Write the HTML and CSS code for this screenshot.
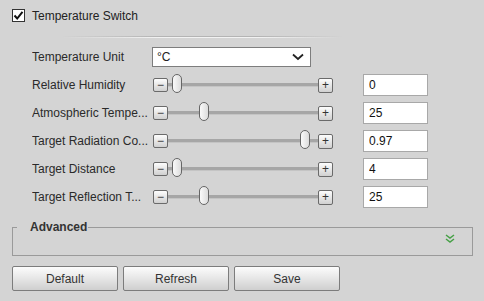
FILE: index.html
```html
<!DOCTYPE html>
<html lang="en">
<head>
  <meta charset="UTF-8">
  <title>Temperature</title>
  <link rel="stylesheet" href="styles.css">
</head>
<body>

<div class="panel">
  <label class="switch">
    <span class="check"><svg width="11" height="11" viewBox="0 0 11 11"><path d="M1.5 5.5 L4.2 8.5 L9.5 1.8" fill="none" stroke="#111" stroke-width="2"/></svg></span>
    Temperature Switch
  </label>

  <div class="sep"></div>

  <div class="rows">
    <div class="row">
      <span class="label">Temperature Unit</span>
      <div class="select">
        <span>°C</span>
        <svg width="12" height="8" viewBox="0 0 12 8"><path d="M1 1.5 L6 6 L11 1.5" fill="none" stroke="#222" stroke-width="1.8"/></svg>
      </div>
    </div>

    <div class="row">
      <span class="label">Relative Humidity</span>
      <div class="slider">
        <span class="step">&minus;</span>
        <div class="track"><div class="range"><span class="thumb" style="left: 0%"></span></div></div>
        <span class="step plus">+</span>
      </div>
      <input class="value" type="text" value="0">
    </div>

    <div class="row">
      <span class="label" title="Atmospheric Temperature">Atmospheric Tempe...</span>
      <div class="slider">
        <span class="step">&minus;</span>
        <div class="track"><div class="range"><span class="thumb" style="left: 20.6%"></span></div></div>
        <span class="step plus">+</span>
      </div>
      <input class="value" type="text" value="25">
    </div>

    <div class="row">
      <span class="label" title="Target Radiation Coefficient">Target Radiation Co...</span>
      <div class="slider">
        <span class="step">&minus;</span>
        <div class="track"><div class="range"><span class="thumb" style="left: 97%"></span></div></div>
        <span class="step plus">+</span>
      </div>
      <input class="value" type="text" value="0.97">
    </div>

    <div class="row">
      <span class="label">Target Distance</span>
      <div class="slider">
        <span class="step">&minus;</span>
        <div class="track"><div class="range"><span class="thumb" style="left: 0%"></span></div></div>
        <span class="step plus">+</span>
      </div>
      <input class="value" type="text" value="4">
    </div>

    <div class="row">
      <span class="label" title="Target Reflection Temperature">Target Reflection T...</span>
      <div class="slider">
        <span class="step">&minus;</span>
        <div class="track"><div class="range"><span class="thumb" style="left: 20.6%"></span></div></div>
        <span class="step plus">+</span>
      </div>
      <input class="value" type="text" value="25">
    </div>
  </div>

  <fieldset class="advanced">
    <legend>Advanced</legend>
    <div class="expand">
      <svg width="10" height="9" viewBox="0 0 10 9"><path d="M1 1 L5 4 L9 1 M1 5 L5 8 L9 5" fill="none" stroke="#46a046" stroke-width="1.5"/></svg>
    </div>
  </fieldset>

  <div class="actions">
    <button>Default</button>
    <button>Refresh</button>
    <button>Save</button>
  </div>
</div>

</body>
</html>
```

FILE: styles.css
```css
body {
  margin: 0;
  background: #d4d4d4;
  font-family: "Liberation Sans", Arial, sans-serif;
  font-size: 12px;
  color: #222;
}
.panel {
  width: 484px;
  height: 301px;
  box-sizing: border-box;
  padding: 9px 11px 0 12px;
}
.switch {
  display: flex;
  align-items: center;
  height: 13px;
  gap: 7px;
}
.check {
  width: 11px;
  height: 11px;
  border: 1px solid #333;
  background: #fff;
  display: flex;
  align-items: center;
  justify-content: center;
}
.sep {
  margin: 14px 0 0 50px;
  width: 280px;
  height: 0;
  border-top: 1px solid #b4b4b4;
  border-bottom: 1px solid #f2f2f2;
  -webkit-mask-image: linear-gradient(to right, transparent, #000 35%, #000 70%, transparent);
  mask-image: linear-gradient(to right, transparent, #000 35%, #000 70%, transparent);
}
.rows {
  margin-top: 5px;
  padding-left: 20px;
}
.row {
  display: flex;
  align-items: center;
  height: 28px;
}
.label {
  width: 120px;
  white-space: nowrap;
  overflow: hidden;
  color: #2a2a2a;
}
.select {
  height: 18px;
  background: #fff;
  border: 1px solid #7d7d7d;
  display: flex;
  align-items: center;
  justify-content: space-between;
  padding: 0 6px 0 4px;
  width: 147px;
}
.slider {
  display: flex;
  align-items: center;
  margin-left: 1px;
  width: 180px;
}
.step {
  width: 13px;
  height: 12px;
  border: 1px solid #6a6a6a;
  border-radius: 2px;
  background: linear-gradient(#fdfdfd, #d0d0d0);
  display: flex;
  align-items: center;
  justify-content: center;
  font-size: 12px;
  line-height: 1;
  color: #333;
}
.plus {
  height: 13px;
}
.track {
  flex: 1;
  height: 3px;
  background: #a6a6a6;
  border-bottom: 1px solid #c4c4c4;
  position: relative;
}
.range {
  position: absolute;
  left: 4px;
  right: 14px;
  top: 0;
  bottom: 0;
}
.thumb {
  position: absolute;
  top: -9px;
  width: 8px;
  height: 17px;
  border: 1px solid #666;
  border-radius: 5px;
  background: linear-gradient(to right, #fafafa, #dcdcdc);
}
.value {
  margin-left: 30px;
  width: 65px;
  height: 22px;
  box-sizing: border-box;
  border: 1px solid #a8a8a8;
  background: #fff;
  font: inherit;
  color: #111;
  padding: 0 5px;
  outline: none;
}
.advanced {
  margin: 9px 0 0 0;
  padding: 0;
  border: 1px solid #9a9a9a;
  height: 36px;
  box-sizing: border-box;
}
.advanced legend {
  margin-left: 4px;
  padding: 0 1px 0 13px;
  font-weight: bold;
  color: #333;
  line-height: 14px;
}
.expand {
  display: flex;
  justify-content: flex-end;
  padding: 0 17px 0 0;
}
.actions {
  display: flex;
  gap: 5px;
  margin-top: 10px;
}
button {
  width: 106px;
  height: 25px;
  border: 1px solid #7c7c7c;
  border-radius: 2px;
  background: linear-gradient(#fcfcfc, #e6e6e6 50%, #cfcfcf);
  font: inherit;
  color: #333;
  cursor: pointer;
}
```
